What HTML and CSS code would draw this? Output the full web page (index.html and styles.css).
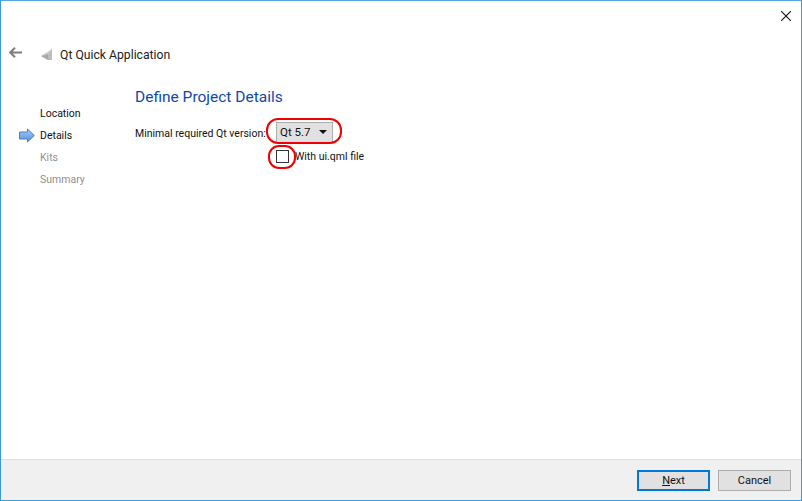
FILE: index.html
```html
<!DOCTYPE html>
<html lang="en">
<head>
<meta charset="utf-8">
<title>Qt Quick Application</title>
<link rel="stylesheet" href="styles.css">
</head>
<body>
<div class="window">
  <div class="titlebar">
    <svg class="close" width="10" height="10" viewBox="0 0 10 10"><path d="M0 0L10 10M10 0L0 10" stroke="#111" stroke-width="1.1" fill="none"/></svg>
  </div>
  <div class="header">
    <svg class="back" width="13" height="11" viewBox="0 0 13 11"><path d="M13 5.5H2M6 .7L1.2 5.5L6 10.3" stroke="#7e7e7e" stroke-width="2" fill="none"/></svg>
    <svg class="appicon" width="12" height="11" viewBox="0 0 12 11"><path d="M0 7L11 0V11H7Z" fill="#cfcfcf"/><path d="M0 7L7 5L8 11H7Z" fill="#a8a8a8"/><path d="M7 5L11 0V11H8Z" fill="#bdbdbd"/></svg>
    <span class="apptitle">Qt Quick Application</span>
  </div>
  <div class="body">
    <nav class="steps">
      <div class="step done">Location</div>
      <div class="step done current">
        <svg class="arrow" width="16" height="15" viewBox="0 0 16 15">
          <defs><linearGradient id="arrowfill" x1="0" y1="0" x2="0" y2="1"><stop offset="0" stop-color="#a9cdf5"/><stop offset="1" stop-color="#4f8fe0"/></linearGradient></defs>
          <path d="M.5 4H8.5V1L15.3 7.5L8.5 14V11H.5Z" fill="url(#arrowfill)" stroke="#4a7cc4"/>
        </svg>
        Details
      </div>
      <div class="step todo">Kits</div>
      <div class="step todo">Summary</div>
    </nav>
    <main class="page">
      <h1 class="pagetitle">Define Project Details</h1>
      <div class="form">
        <label class="label">Minimal required Qt version:</label>
        <div class="combo">Qt 5.7<span class="caret"></span></div>
        <span></span>
        <label class="check"><span class="box"></span>With ui.qml file</label>
      </div>
    </main>
  </div>
  <div class="footer">
    <button class="btn primary"><u>N</u>ext</button>
    <button class="btn">Cancel</button>
  </div>
  <div class="mark mark-combo"></div>
  <div class="mark mark-check"></div>
</div>
</body>
</html>
```
FILE: styles.css
```css
* { box-sizing: border-box; }
html, body { margin: 0; height: 100%; }
body { font-family: Roboto, "Open Sans", sans-serif; font-size: 10.5px; color: #111; background: #fff; }
.window { position: relative; width: 802px; height: 501px; border: 1px solid #3c9ad6; border-top-color: #55a9de; display: flex; flex-direction: column; background: #fff; }
.titlebar { height: 30px; display: flex; justify-content: flex-end; padding: 10px 10px 0 0; }
.close { display: block; }
.header { height: 47px; display: flex; align-items: center; padding-left: 8px; }
.back { margin-right: 19px; margin-top: -4px; }
.appicon { margin-right: 7px; }
.apptitle { font-size: 12.2px; color: #222; }
.body { flex: 1; display: flex; }
.steps { width: 134px; padding-top: 25px; }
.step { height: 22px; line-height: 22px; padding-left: 39px; position: relative; }
.step.todo { color: #8f8f8f; }
.arrow { position: absolute; left: 18px; top: 3px; }
.page { flex: 1; padding-top: 8px; }
.pagetitle { margin: 0 0 15px; font-size: 15.5px; font-weight: 400; line-height: 22px; color: #0f48a8; }
.form { display: grid; grid-template-columns: 141px auto; justify-content: start; align-items: center; row-gap: 7px; }
.label { white-space: nowrap; }
.combo { width: 57px; height: 21px; background: #e1e1e1; border: 1px solid #adadad; padding-left: 3px; line-height: 19px; font-size: 11.5px; position: relative; margin-top: -1px; }
.caret { position: absolute; right: 5px; top: 7px; border: 4px solid transparent; border-top: 4px solid #111; border-bottom: 0; }
.check { display: flex; align-items: center; height: 14px; white-space: nowrap; margin-top: -1px; }
.box { width: 13px; height: 13px; border: 1px solid #333; background: #fff; margin-right: 6px; }
.footer { height: 41px; background: #f0f0f0; border-top: 1px solid #dfdfdf; display: flex; justify-content: flex-end; align-items: flex-start; gap: 8px; padding: 10px 10px 0 0; }
.btn { width: 73px; height: 21px; padding: 0; background: #e1e1e1; border: 1px solid #adadad; font: inherit; font-size: 11px; color: #111; }
.btn.primary { border: 2px solid #0078d7; }
.mark { position: absolute; border: 2.5px solid #f00000; background: transparent; }
.mark-combo { left: 265px; top: 117px; width: 76px; height: 26px; border-radius: 12px; }
.mark-check { left: 267px; top: 144px; width: 28px; height: 24px; border-radius: 11px; }
```
